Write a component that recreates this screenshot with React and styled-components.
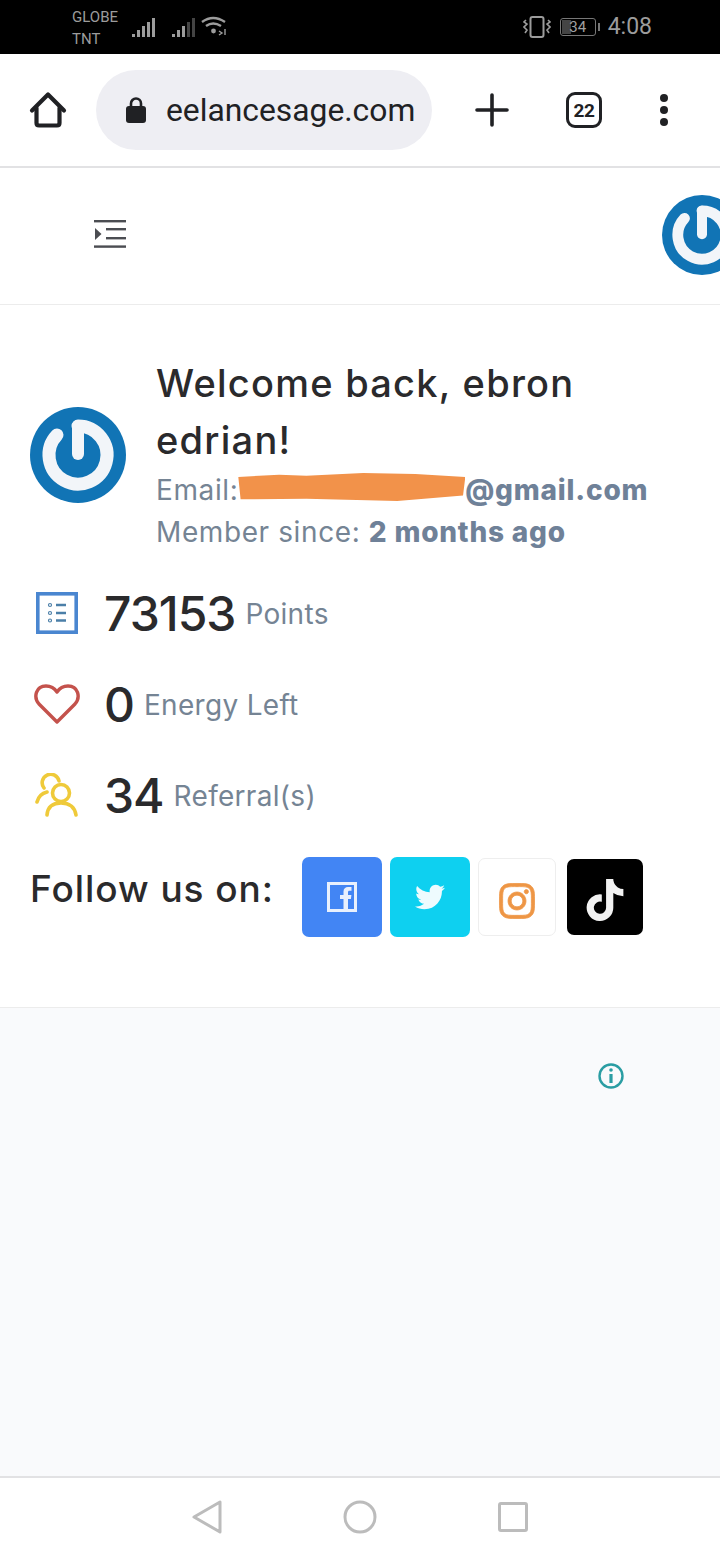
import { createGlobalStyle } from "styled-components";
import styled from "styled-components";
import { FaTwitter, FaTiktok, FaInstagram } from "react-icons/fa";

const Global = createGlobalStyle`
  html, body { margin: 0; padding: 0; background: #fff; }
  * { box-sizing: border-box; }
`;

function Logo({ size }) {
  return (
    <LogoSvg $size={size} viewBox="0 0 96 96">
      <circle cx="48" cy="48" r="48" fill="#1174b5" />
      <path d="M48 19 A29 29 0 1 1 27 28" fill="none" stroke="#f2f5f9" strokeWidth="13" strokeLinecap="round" />
      <path d="M48 19 L48 47" fill="none" stroke="#f2f5f9" strokeWidth="12" strokeLinecap="round" />
    </LogoSvg>
  );
}

function Signal({ dim }) {
  const bars = [[0, 3], [5, 7], [10, 11], [15, 15], [20, 19]];
  return (
    <svg width="23" height="20" viewBox="0 0 23 20">
      {bars.map(([x, h], i) => (
        <rect key={x} x={x} y={20 - h} width="3" height={h} fill={dim && i > 2 ? "#444" : "#9c9c9c"} />
      ))}
    </svg>
  );
}

export default function App() {
  return (
    <Page>
      <Global />
      <StatusBar>
        <Carrier>
          <span>GLOBE</span>
          <span>TNT</span>
        </Carrier>
        <SignalGroup>
          <Signal />
          <Signal dim />
          <svg width="26" height="22" viewBox="0 0 26 22" fill="none" stroke="#9c9c9c" strokeWidth="2.4">
            <path d="M1 6 Q12 -2 24 6" />
            <path d="M5 10 Q12 5 20 10" />
            <circle cx="12.5" cy="15" r="2.4" fill="#9c9c9c" stroke="none" />
            <path d="M18 15 l3 2 l-3 2 M24 13 v6" strokeWidth="1.4" />
          </svg>
        </SignalGroup>
        <StatusRight>
          <svg width="28" height="22" viewBox="0 0 28 22" fill="none" stroke="#9c9c9c" strokeWidth="2">
            <rect x="7.5" y="1" width="13" height="20" rx="2" />
            <path d="M3 4 l-2 2 l3 2 l-3 3 l3 3 l-2 3 M25 4 l2 2 l-3 2 l3 3 l-3 3 l2 3" strokeWidth="1.6" />
          </svg>
          <Battery>
            <BatteryFill />
            <BatteryLabel>34</BatteryLabel>
          </Battery>
          <Clock>4:08</Clock>
        </StatusRight>
      </StatusBar>

      <BrowserBar>
        <HomeSlot>
          <svg width="38" height="38" viewBox="0 0 38 38" fill="none" stroke="#202124" strokeWidth="4.2" strokeLinejoin="round" strokeLinecap="round">
            <path d="M3 19.5 L19 3.5 L35 19.5" />
            <path d="M7.5 17 V32 Q7.5 34.5 10 34.5 H28 Q30.5 34.5 30.5 32 V17" />
          </svg>
        </HomeSlot>
        <UrlPill>
          <svg width="20" height="28" viewBox="0 0 20 28">
            <path d="M5 11 V7.5 a5 5 0 0 1 10 0 V11" fill="none" stroke="#202124" strokeWidth="2.6" />
            <rect x="0" y="10" width="20" height="17" rx="3" fill="#202124" />
          </svg>
          <UrlText>eelancesage.com</UrlText>
        </UrlPill>
        <PlusSlot>
          <svg width="34" height="34" viewBox="0 0 34 34" stroke="#202124" strokeWidth="3.6" strokeLinecap="round">
            <path d="M2 17 H32 M17 2 V32" />
          </svg>
        </PlusSlot>
        <TabsSlot>
          <TabsCount>22</TabsCount>
        </TabsSlot>
        <DotsSlot>
          <Dot />
          <Dot />
          <Dot />
        </DotsSlot>
      </BrowserBar>

      <SiteHeader>
        <MenuIcon width="32" height="28" viewBox="0 0 32 28" fill="#4b4d52">
          <rect x="0" y="0" width="32" height="2.4" />
          <rect x="12" y="8" width="20" height="2.4" />
          <rect x="12" y="17" width="20" height="2.4" />
          <rect x="0" y="25.4" width="32" height="2.4" />
          <path d="M1 8 L7.5 14 L1 20 Z" />
        </MenuIcon>
        <HeaderLogo>
          <Logo size={80} />
        </HeaderLogo>
      </SiteHeader>

      <Profile>
        <Intro>
          <AvatarWrap>
            <Logo size={96} />
          </AvatarWrap>
          <IntroText>
            <Welcome>Welcome back, ebron edrian!</Welcome>
            <Meta>
              Email:<Redacted />
              <strong>@gmail.com</strong>
            </Meta>
            <Meta>
              Member since: <strong>2 months ago</strong>
            </Meta>
          </IntroText>
        </Intro>

        <Stats>
          <Stat>
            <StatIcon>
              <svg width="42" height="42" viewBox="0 0 42 42" fill="none" stroke="#4a86d0">
                <rect x="1.8" y="1.8" width="38.4" height="38.4" strokeWidth="3.6" />
                <path d="M20 13 H30 M20 21 H30 M20 28.5 H30" stroke="#4b7fa8" strokeWidth="2.6" />
                <circle cx="14" cy="13" r="1.5" strokeWidth="1.2" stroke="#4b7fa8" />
                <circle cx="14" cy="21" r="1.5" strokeWidth="1.2" stroke="#4b7fa8" />
                <circle cx="14" cy="28.5" r="1.5" strokeWidth="1.2" stroke="#4b7fa8" />
              </svg>
            </StatIcon>
            <StatValue>73153</StatValue>
            <StatLabel>Points</StatLabel>
          </Stat>
          <Stat>
            <StatIcon>
              <svg width="46" height="40" viewBox="0 0 46 40" fill="none" stroke="#c4524c" strokeWidth="3.4" strokeLinejoin="round">
                <path d="M23 38 L5 20 C-1 13 2 2 12 2 C17 2 21 5 23 8 C25 5 29 2 34 2 C44 2 47 13 41 20 Z" />
              </svg>
            </StatIcon>
            <StatValue>0</StatValue>
            <StatLabel>Energy Left</StatLabel>
          </Stat>
          <Stat>
            <StatIcon>
              <svg width="44" height="44" viewBox="0 0 44 44" fill="none" stroke="#efca3a" strokeWidth="3.6" strokeLinecap="round">
                <path d="M9 15 A8.5 8.5 0 1 1 24 8" />
                <path d="M12 19 Q4 21 2 29" />
                <circle cx="26" cy="20" r="8.5" />
                <path d="M12 42 Q13 30 26 30 Q39 30 41 42" />
              </svg>
            </StatIcon>
            <StatValue>34</StatValue>
            <StatLabel>Referral(s)</StatLabel>
          </Stat>
        </Stats>

        <Follow>
          <FollowTitle>Follow us on:</FollowTitle>
          <Socials>
            <Social $bg="#4285f4">
              <svg width="30" height="30" viewBox="0 0 30 30">
                <rect x="1.5" y="1.5" width="27" height="27" fill="none" stroke="#e8f0fd" strokeWidth="3" />
                <path d="M16.5 28 V17 H13 V13 H16.5 V9.5 C16.5 6.5 18.5 5 21 5 H24.5 V8.8 H22.5 C21.3 8.8 21 9.4 21 10.4 V13 H24.4 L23.9 17 H21 V28 Z" fill="#e8f0fd" />
              </svg>
            </Social>
            <Social $bg="#0ed0f0">
              <FaTwitter size={30} color="#eefbfe" />
            </Social>
            <Social $bg="#fff" $size={78} $border="#eeeeee" $nudge={8}>
              <FaInstagram size={40} color="#ee9645" stroke="#ee9645" strokeWidth="10" />
            </Social>
            <Social $bg="#000" $size={76} $offset={3} $nudge={6}>
              <FaTiktok size={42} color="#f2f2f2" />
            </Social>
          </Socials>
        </Follow>
      </Profile>

      <AdArea>
        <svg width="26" height="26" viewBox="0 0 26 26" fill="none" stroke="#2a9da3" strokeWidth="2.4">
          <circle cx="13" cy="13" r="11.5" />
          <path d="M13 11 V20" strokeWidth="3.2" />
          <circle cx="13" cy="7" r="1.8" fill="#2a9da3" stroke="none" />
        </svg>
      </AdArea>

      <NavBar>
        <NavSlot>
          <svg width="30" height="34" viewBox="0 0 30 34" fill="none" stroke="#bcbcbc" strokeWidth="3" strokeLinejoin="round">
            <path d="M28 2 V32 L2 17 Z" />
          </svg>
        </NavSlot>
        <NavSlot>
          <svg width="34" height="34" viewBox="0 0 34 34" fill="none" stroke="#bcbcbc" strokeWidth="3">
            <circle cx="17" cy="17" r="15" />
          </svg>
        </NavSlot>
        <NavSlot>
          <svg width="30" height="30" viewBox="0 0 30 30" fill="none" stroke="#bcbcbc" strokeWidth="3" strokeLinejoin="round">
            <rect x="1.5" y="1.5" width="27" height="27" rx="1.5" />
          </svg>
        </NavSlot>
      </NavBar>
    </Page>
  );
}

const Page = styled.div`
  width: 720px;
  height: 1560px;
  overflow: hidden;
  display: flex;
  flex-direction: column;
  background: #fff;
  font-family: Inter, "Liberation Sans", sans-serif;
`;

const StatusBar = styled.div`
  height: 54px;
  flex-shrink: 0;
  background: #000;
  color: #9c9c9c;
  display: flex;
  align-items: center;
  padding: 0 68px 0 72px;
  font-family: Roboto, sans-serif;
`;

const Carrier = styled.div`
  display: flex;
  flex-direction: column;
  width: 60px;
  font-size: 15px;
  line-height: 22px;
  padding-top: 1px;
`;

const SignalGroup = styled.div`
  display: flex;
  align-items: center;
  gap: 17px;
  svg:last-child {
    margin-left: -11px;
  }
`;

const StatusRight = styled.div`
  margin-left: auto;
  display: flex;
  align-items: center;
  gap: 9px;
`;

const Battery = styled.div`
  position: relative;
  width: 36px;
  height: 18px;
  border: 1px solid #777;
  border-radius: 3px;
  margin-right: 3px;
  &::after {
    content: "";
    position: absolute;
    right: -5px;
    top: 4px;
    width: 2px;
    height: 8px;
    background: #777;
  }
`;

const BatteryFill = styled.div`
  position: absolute;
  left: 1px;
  top: 1px;
  bottom: 1px;
  width: 9px;
  background: #444;
`;

const BatteryLabel = styled.div`
  position: relative;
  text-align: center;
  font-size: 15px;
  line-height: 16px;
  color: #a0a0a0;
`;

const Clock = styled.div`
  font-size: 23px;
  line-height: 26px;
`;

const BrowserBar = styled.div`
  height: 114px;
  flex-shrink: 0;
  display: flex;
  align-items: center;
  border-bottom: 2px solid #e2e2e4;
  font-family: Roboto, sans-serif;
  color: #202124;
`;

const HomeSlot = styled.div`
  width: 96px;
  display: flex;
  justify-content: center;
`;

const UrlPill = styled.div`
  width: 336px;
  height: 80px;
  background: #eeeef3;
  border-radius: 40px;
  display: flex;
  align-items: center;
  gap: 20px;
  padding-left: 30px;
`;

const UrlText = styled.div`
  font-size: 31.8px;
`;

const PlusSlot = styled.div`
  width: 120px;
  display: flex;
  justify-content: center;
`;

const TabsSlot = styled.div`
  width: 64px;
  display: flex;
  justify-content: center;
`;

const TabsCount = styled.div`
  width: 36px;
  height: 36px;
  border: 3.6px solid #202124;
  border-radius: 9px;
  display: flex;
  align-items: center;
  justify-content: center;
  font-size: 19px;
  font-weight: 700;
  letter-spacing: -0.5px;
`;

const DotsSlot = styled.div`
  width: 96px;
  display: flex;
  flex-direction: column;
  align-items: center;
  gap: 4px;
`;

const Dot = styled.div`
  width: 8px;
  height: 8px;
  border-radius: 50%;
  background: #202124;
`;

const SiteHeader = styled.div`
  height: 137px;
  flex-shrink: 0;
  display: flex;
  align-items: center;
  justify-content: space-between;
  padding-left: 94px;
  border-bottom: 1px solid #ececec;
`;

const MenuIcon = styled.svg`
  margin-bottom: 5px;
`;

const HeaderLogo = styled.div`
  margin-right: -22px;
  margin-bottom: 2px;
  display: flex;
`;

const LogoSvg = styled.svg`
  width: ${({ $size }) => $size}px;
  height: ${({ $size }) => $size}px;
  flex-shrink: 0;
`;

const Profile = styled.div`
  flex-shrink: 0;
  height: 703px;
  padding: 50px 30px 0;
  border-bottom: 1px solid #ececec;
`;

const Intro = styled.div`
  display: flex;
  align-items: center;
  gap: 30px;
`;

const AvatarWrap = styled.div`
  display: flex;
  margin-top: 2px;
`;

const IntroText = styled.div`
  flex: 1;
`;

const Welcome = styled.h1`
  margin: 0;
  font-size: 38px;
  line-height: 57px;
  font-weight: 500;
  letter-spacing: 1.25px;
  color: #2a2a2c;
  width: 450px;
`;

const Meta = styled.div`
  font-size: 28px;
  line-height: 42px;
  letter-spacing: 0.6px;
  color: #758494;
  white-space: nowrap;
  strong {
    font-weight: 800;
    letter-spacing: 0.8px;
    color: #6f8198;
  }
`;

const Redacted = styled.span`
  display: inline-block;
  width: 227px;
  height: 28px;
  vertical-align: -1px;
  background: #f2924a;
  clip-path: polygon(0 14%, 18% 6%, 30% 10%, 55% 0, 78% 4%, 100% 14%, 99% 80%, 70% 100%, 30% 92%, 1% 94%);
`;

const Stats = styled.div`
  margin-top: 30px;
  display: flex;
  flex-direction: column;
  gap: 31px;
`;

const Stat = styled.div`
  height: 60px;
  display: flex;
  align-items: center;
`;

const StatIcon = styled.div`
  width: 54px;
  margin-right: 20px;
  display: flex;
  justify-content: center;
`;

const StatValue = styled.div`
  font-size: 48px;
  font-weight: 500;
  letter-spacing: -1px;
  color: #2a2a2c;
  margin-right: 10px;
`;

const StatLabel = styled.div`
  font-size: 28px;
  letter-spacing: 0.3px;
  color: #758494;
  margin-top: 2px;
`;

const Follow = styled.div`
  margin-top: 32px;
  display: flex;
  align-items: flex-start;
`;

const FollowTitle = styled.div`
  width: 272px;
  font-size: 37px;
  line-height: 64px;
  font-weight: 500;
  letter-spacing: 0.95px;
  color: #2a2a2c;
  white-space: nowrap;
`;

const Socials = styled.div`
  display: flex;
  align-items: center;
  gap: 8px;
`;

const Social = styled.div`
  width: ${({ $size = 80 }) => $size}px;
  height: ${({ $size = 80 }) => $size}px;
  margin-left: ${({ $offset = 0 }) => $offset}px;
  padding-top: ${({ $nudge = 0 }) => $nudge}px;
  background: ${({ $bg }) => $bg};
  border-radius: 7px;
  border: ${({ $border }) => ($border ? `1px solid ${$border}` : "none")};
  display: flex;
  align-items: center;
  justify-content: center;
`;

const AdArea = styled.div`
  flex: 1;
  background: #f9fafc;
  display: flex;
  align-items: flex-start;
  justify-content: flex-end;
  padding: 55px 96px 0 0;
`;

const NavBar = styled.div`
  height: 84px;
  flex-shrink: 0;
  background: #fff;
  border-top: 2px solid #e2e2e4;
  display: flex;
  align-items: center;
  justify-content: center;
  padding-bottom: 4px;
`;

const NavSlot = styled.div`
  width: 153px;
  display: flex;
  justify-content: center;
`;
